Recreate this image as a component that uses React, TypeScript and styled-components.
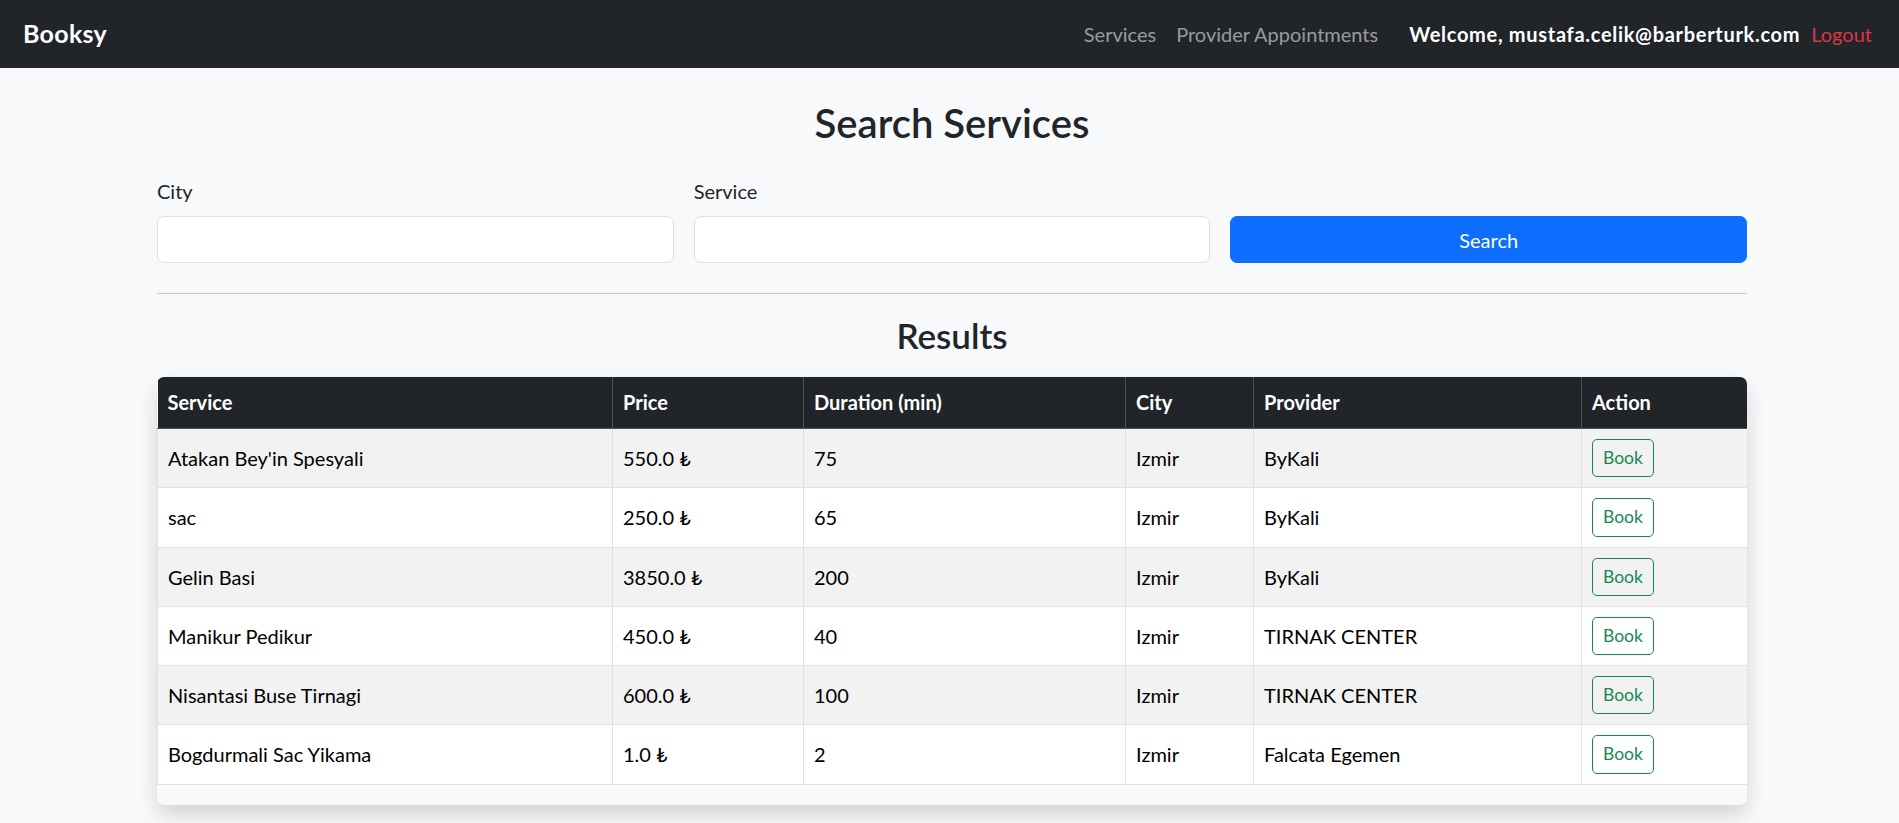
import React from "react";
import styled, { createGlobalStyle } from "styled-components";

const GlobalStyle = createGlobalStyle`
  html, body { margin: 0; padding: 0; }
  body {
    background: #f8f9fa;
    font-family: Lato, "Open Sans", "DejaVu Sans", sans-serif;
    color: #212529;
    font-size: 20px;
    line-height: 1.5;
  }
  * { box-sizing: border-box; }
`;

const Navbar = styled.nav`
  height: 68px;
  background: #212529;
  display: flex;
  align-items: center;
  justify-content: space-between;
  padding: 0 27px 0 23px;
`;

const Brand = styled.a`
  font-size: 25px;
  font-weight: 700;
  color: #fff;
  text-decoration: none;
  letter-spacing: 0.3px;
`;

const NavRight = styled.div`
  display: flex;
  align-items: center;
`;

const NavLink = styled.a`
  color: rgba(255, 255, 255, 0.55);
  padding: 0 10px;
  text-decoration: none;
`;

const Welcome = styled.span`
  color: #fff;
  font-weight: 700;
  margin-left: 21px;
  letter-spacing: 0.7px;
`;

const Logout = styled.a`
  color: #dc3545;
  margin-left: 11px;
  text-decoration: none;
`;

const Main = styled.main`
  width: 1590px;
  margin: 31px 0 20px calc(50% - 792.5px);
`;

const PageTitle = styled.h2`
  font-size: 40px;
  font-weight: 600;
  line-height: 1.2;
  text-align: center;
  margin: 0 0 29px;
`;

const SearchForm = styled.form`
  display: grid;
  grid-template-columns: repeat(3, 1fr);
  column-gap: 20px;
  align-items: end;
`;

const Field = styled.div`
  display: flex;
  flex-direction: column;
`;

const Label = styled.label`
  margin-bottom: 10px;
`;

const Input = styled.input`
  height: 47px;
  border: 1px solid #dee2e6;
  border-radius: 7px;
  background: #fff;
  padding: 7px 15px;
  font: inherit;
`;

const SearchButton = styled.button`
  height: 47px;
  border: 1px solid #0d6efd;
  border-radius: 7px;
  background: #0d6efd;
  color: #fff;
  font: inherit;
  cursor: pointer;
`;

const Divider = styled.hr`
  border: 0;
  border-top: 1px solid #c4c6c8;
  margin: 30px 0 20px;
`;

const SectionTitle = styled.h3`
  font-size: 35px;
  font-weight: 600;
  line-height: 1.2;
  text-align: center;
  margin: 0 0 21px;
`;

const Card = styled.div`
  border-radius: 7px;
  box-shadow: 0 10px 20px rgba(0, 0, 0, 0.15);
  overflow: hidden;
  padding-bottom: 20px;
`;

const Table = styled.table`
  width: 100%;
  border-collapse: collapse;
  table-layout: fixed;
`;

const Th = styled.th`
  background: #212529;
  color: #fff;
  font-weight: 700;
  text-align: left;
  padding: 10px 10px 11px;
  border: 1px solid #4d5154;
  border-top: 0;
  &:first-child { border-left: 0; }
  &:last-child { border-right: 0; }
`;

const Tr = styled.tr<{ $striped: boolean }>`
  background: ${(p) => (p.$striped ? "#f2f2f2" : "#fff")};
`;

const Td = styled.td`
  padding: 10px;
  border: 1px solid #dee2e6;
  vertical-align: middle;
  color: #000;
  white-space: nowrap;
`;

const BookButton = styled.button`
  border: 1px solid #198754;
  color: #198754;
  background: transparent;
  font-family: inherit;
  font-size: 17.5px;
  line-height: 1.5;
  padding: 5px 10px;
  border-radius: 5px;
  cursor: pointer;
`;

const Footer = styled.footer`
  height: 60px;
  background: #212529;
`;

const columns = [
  { title: "Service", width: 455 },
  { title: "Price", width: 191 },
  { title: "Duration (min)", width: 322 },
  { title: "City", width: 128 },
  { title: "Provider", width: 328 },
  { title: "Action", width: 166 },
];

const rows = [
  ["Atakan Bey'in Spesyali", "550.0 ₺", "75", "Izmir", "ByKali"],
  ["sac", "250.0 ₺", "65", "Izmir", "ByKali"],
  ["Gelin Basi", "3850.0 ₺", "200", "Izmir", "ByKali"],
  ["Manikur Pedikur", "450.0 ₺", "40", "Izmir", "TIRNAK CENTER"],
  ["Nisantasi Buse Tirnagi", "600.0 ₺", "100", "Izmir", "TIRNAK CENTER"],
  ["Bogdurmali Sac Yikama", "1.0 ₺", "2", "Izmir", "Falcata Egemen"],
];

export default function App() {
  return (
    <>
      <GlobalStyle />
      <Navbar>
        <Brand href="#">Booksy</Brand>
        <NavRight>
          <NavLink href="#">Services</NavLink>
          <NavLink href="#">Provider Appointments</NavLink>
          <Welcome>Welcome, mustafa.celik@barberturk.com</Welcome>
          <Logout href="#">Logout</Logout>
        </NavRight>
      </Navbar>
      <Main>
        <PageTitle>Search Services</PageTitle>
        <SearchForm onSubmit={(e) => e.preventDefault()}>
          <Field>
            <Label>City</Label>
            <Input type="text" />
          </Field>
          <Field>
            <Label>Service</Label>
            <Input type="text" />
          </Field>
          <SearchButton type="submit">Search</SearchButton>
        </SearchForm>
        <Divider />
        <SectionTitle>Results</SectionTitle>
        <Card>
          <Table>
            <colgroup>
              {columns.map((c) => (
                <col key={c.title} style={{ width: c.width }} />
              ))}
            </colgroup>
            <thead>
              <tr>
                {columns.map((c) => (
                  <Th key={c.title}>{c.title}</Th>
                ))}
              </tr>
            </thead>
            <tbody>
              {rows.map((r, i) => (
                <Tr key={i} $striped={i % 2 === 0}>
                  {r.map((cell, j) => (
                    <Td key={j}>{cell}</Td>
                  ))}
                  <Td>
                    <BookButton type="button">Book</BookButton>
                  </Td>
                </Tr>
              ))}
            </tbody>
          </Table>
        </Card>
      </Main>
      <Footer />
    </>
  );
}
